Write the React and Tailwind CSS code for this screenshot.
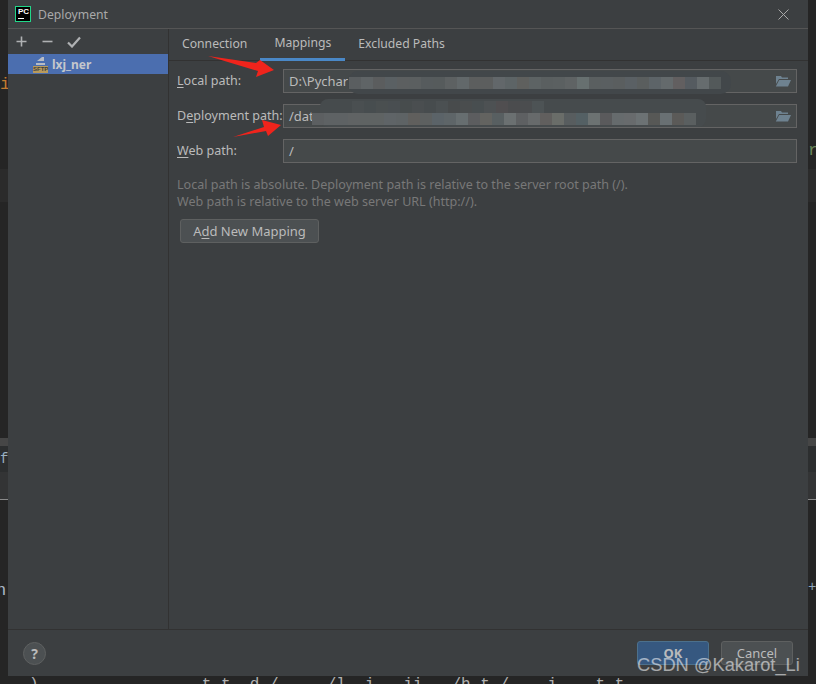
const font = { fontFamily: '"Noto Sans", "Open Sans", sans-serif' };

const row1 = ['#5a5e60','#5f6466','#5b5d5e','#5a6063','#5c5f60','#5b5f60','#565b5d','#565b5c','#5d6162','#62686a','#5c5e5e','#5c5e5e','#62676a','#5d6466','#5f605e','#5d6364','#5a5f60','#5b6061','#5f6364','#677070','#5a5f60','#5a5f61','#5a5e5f','#5a6064','#5a5e5e','#5d6468','#646a6c','#625f60','#555b60','#666c6e','#53595a'];
const row2 = ['#5c5f61','#5e6264','#5e6264','#606364','#5f6363','#5f6363','#5f6467','#5e6365','#605f5d','#5d6060','#5b6368','#5e6568','#676e70','#5c5d5f','#636360','#585f61','#6b7071','#5e6062','#676a6b','#615f5e','#6a6d69','#585d5f','#546064','#6c7272','#5a5a5c','#666b6d','#686b6d','#6c7274','#575856','#697073','#5b5a58','#5a5f60'];
const row3 = ['#4a4f51','#474d4f','#4a4f50','#494e51','#474c4d','#4a4e50','#474c4e','#4b5052','#484b4c','#4a4d4e','#484e50','#4d5153','#504e50','#4b4c4e','#4b4d4f','#4d5355'];

function Mosaic({ cells, className }) {
  return (
    <div className={"absolute flex h-3 " + className}>
      {cells.map((c, i) => (
        <div key={i} className="w-3 h-3" style={{ backgroundColor: c }} />
      ))}
    </div>
  );
}

function Mn({ children }) {
  return <span className="underline underline-offset-2">{children}</span>;
}

function Folder() {
  return (
    <svg width="16" height="12" viewBox="0 0 16 12" className="shrink-0">
      <path d="M1 1h5l1 1.5h6V4H4L1 9z" fill="#6e8290" />
      <path d="M4.2 5H16l-3 6.500H0.800z" fill="#6e8290" />
    </svg>
  );
}

function PathField({ value, folder }) {
  return (
    <div className="flex-1 h-6 border border-[#646464] bg-[#45494a] flex items-center justify-between pl-[5px] pr-[5px] text-[#bbbbbb] text-[13px]">
      <span className="whitespace-nowrap">{value}</span>
      {folder && <Folder />}
    </div>
  );
}

function Row({ label, children }) {
  return (
    <div className="flex items-center h-6">
      <div className="w-[106px] text-[#bbbbbb] whitespace-nowrap pb-px">{label}</div>
      {children}
    </div>
  );
}

export default function App() {
  return (
    <div className="relative w-[816px] h-[684px] overflow-hidden bg-[#252525] text-[12.55px] leading-[17px]" style={font}>
      {/* editor peeking out behind the dialog */}
      <div className="absolute left-0 top-[169px] w-full h-[33px] bg-[#2b2b2b]" />
      <div className="absolute left-0 top-[438px] w-full h-2 bg-[#464646]" />
      <div className="absolute left-0 top-[446px] w-full h-[26px] bg-[#2c2e2f]" />
      <div className="absolute left-0 top-[472px] w-full h-[27px] bg-[#333435]" />
      <div className="absolute left-0 top-[499px] w-full h-px bg-[#8a8a8a]" />
      <div className="absolute left-0 top-[74px] text-[#c47a30] text-[17px] leading-[22px] font-['Liberation_Mono']">i</div>
      <div className="absolute left-0 top-[450px] text-[#9ab0c0] text-[14px] leading-[18px] font-['Liberation_Mono']">f</div>
      <div className="absolute -left-[4px] top-[580px] text-[#a9b7c6] text-[17px] leading-[22px] font-['Liberation_Mono']">n</div>
      <div className="absolute left-[808px] top-[140px] text-[#6a8759] text-[17px] leading-[22px] font-['Liberation_Mono']">r</div>
      <div className="absolute left-[808px] top-[577px] text-[#8fa6bd] text-[14px] leading-[20px] font-['Liberation_Mono']">+</div>
      <div className="absolute left-[29px] top-[675px] whitespace-pre text-[#b0b0b0] text-[16px] leading-[20px] font-['Liberation_Mono']">
        {")                 t t  d /     /l  i   ii   /h t /    i    t t"}
      </div>

      {/* dialog */}
      <div className="relative ml-2 w-[800px] h-[676px] bg-[#3c3f41] flex flex-col">
        <div className="h-[29px] shrink-0 flex items-center border-b border-[#555555] pl-[7px] pr-[19px]">
          <div className="w-4 h-4 bg-black border border-[#21d789] flex flex-col px-[2px] mr-[7px] shrink-0">
            <span className="text-white font-bold text-[8px] leading-[9px] font-['Liberation_Sans']">PC</span>
            <span className="w-[6px] h-px bg-white mt-[2px]" />
          </div>
          <span className="text-[#a9a9a9] flex-1 text-[12.2px]">Deployment</span>
          <svg width="11" height="11" viewBox="0 0 11 11">
            <path d="M0.500 0.500l10 10M10.500 0.500l-10 10" stroke="#a8a8a8" strokeWidth="1" fill="none" />
          </svg>
        </div>

        <div className="flex-1 flex min-h-0 border-b border-[#323232]">
          {/* sidebar */}
          <div className="w-[161px] shrink-0 border-r border-[#323232] flex flex-col">
            <div className="h-[25px] shrink-0 flex items-center pl-2 gap-[15px]">
              <svg width="11" height="11" viewBox="0 0 11 11">
                <path d="M5.500 0.500v10M0.500 5.500h10" stroke="#afb1b3" strokeWidth="1.600" />
              </svg>
              <svg width="11" height="11" viewBox="0 0 11 11">
                <path d="M0.500 5.500h10" stroke="#afb1b3" strokeWidth="1.600" />
              </svg>
              <svg width="14" height="12" viewBox="0 0 14 12" className="-ml-px">
                <path d="M1 6.500l4 4 8-9" stroke="#afb1b3" strokeWidth="2.200" fill="none" />
              </svg>
            </div>
            <div className="h-5 bg-[#4b6eaf] flex items-center pl-[25px]">
              <div className="w-[15px] h-[17px] relative shrink-0 mr-1">
                <svg width="15" height="11" viewBox="0 0 15 11" className="absolute left-0 top-0">
                  <path d="M4 5l5-4h2v4z" fill="#b8bcc4" />
                  <path d="M3 7h9v2H3z" fill="#b8bcc4" />
                </svg>
                <span className="absolute left-0 top-[10px] w-[15px] h-[7px] bg-[#b89a5c] text-[#3c3f41] text-[6px] leading-[7px] font-bold text-center font-['Liberation_Sans']">SFTP</span>
              </div>
              <span className="font-bold text-[#c4c7cc] text-[12px]">lxj_ner</span>
            </div>
          </div>

          {/* content */}
          <div className="flex-1 flex flex-col min-w-0">
            <div className="h-8 shrink-0 flex border-b border-[#323232] text-[#bbbbbb] text-[12.2px]">
              <div className="px-[13px] flex items-center pb-[3px]">Connection</div>
              <div className="w-[85px] flex items-center justify-center pb-[3px] border-b-[3px] border-[#4a88c7] h-[32px]">Mappings</div>
              <div className="px-[13px] flex items-center pb-[3px]">Excluded Paths</div>
            </div>
            <div className="flex flex-col gap-[11px] pl-2 pr-[11px] pt-2">
              <Row label={<><Mn>L</Mn>ocal path:</>}><PathField value="D:\Pycharm" folder /></Row>
              <Row label={<>D<Mn>e</Mn>ployment path:</>}><PathField value="/data" folder /></Row>
              <Row label={<><Mn>W</Mn>eb path:</>}><PathField value="/" /></Row>
            </div>
            <div className="pl-2 mt-[13px] text-[#787878]">
              <div>Local path is absolute. Deployment path is relative to the server root path (/).</div>
              <div>Web path is relative to the web server URL (http://).</div>
            </div>
            <div className="pl-[11px] mt-[9px]">
              <div className="w-[139px] h-6 rounded-[3px] border border-[#5e6060] bg-[#4c5052] text-[#bbbbbb] text-[13px] flex items-center justify-center">
                <span>A<Mn>d</Mn>d New Mapping</span>
              </div>
            </div>
          </div>
        </div>

        {/* footer */}
        <div className="h-[46px] shrink-0 flex items-start pt-[11px] pl-[15px] pr-[15px]">
          <div className="w-[23px] h-[23px] mt-[1px] rounded-full border border-[#5e6060] bg-[#4c5052] text-[#bbbbbb] flex items-center justify-center font-bold text-[14px]">?</div>
          <div className="flex-1" />
          <div className="w-[72px] h-6 mr-[12px] rounded-[3px] border border-[#4c708c] bg-[#365880] text-[#bbbbbb] font-bold text-[13px] flex items-center justify-center">OK</div>
          <div className="w-[72px] h-6 rounded-[3px] border border-[#5e6060] bg-[#4c5052] text-[#bbbbbb] text-[13px] flex items-center justify-center">Cancel</div>
        </div>
      </div>

      {/* redaction smudges painted over the screenshot */}
      <div className="absolute left-[348px] top-[71px] w-[383px] h-[23px] rounded-[10px] bg-[#42474a]" />
      <div className="absolute left-[320px] top-[99px] w-[386px] h-[28px] rounded-[8px] bg-[#464b4d]" />
      <Mosaic cells={row1} className="left-[349px] top-[77px]" />
      <Mosaic cells={row3} className="left-[352px] top-[101px]" />
      <Mosaic cells={row2} className="left-[312px] top-[113px]" />

      {/* arrows */}
      <svg width="816" height="684" viewBox="0 0 816 684" className="absolute left-0 top-0 pointer-events-none">
        <path d="M208 56L256 63L260 60L274 70L256 77L258 71z" fill="#f0241c" />
        <path d="M233 137L264 127L262 120L281 125L268 136L266 131z" fill="#f0241c" />
      </svg>

      {/* watermark */}
      <div className="absolute left-[637px] top-[654px] text-[18.3px] leading-[22px] text-white/55 font-['Liberation_Sans'] whitespace-nowrap">CSDN @Kakarot_Li</div>
    </div>
  );
}
